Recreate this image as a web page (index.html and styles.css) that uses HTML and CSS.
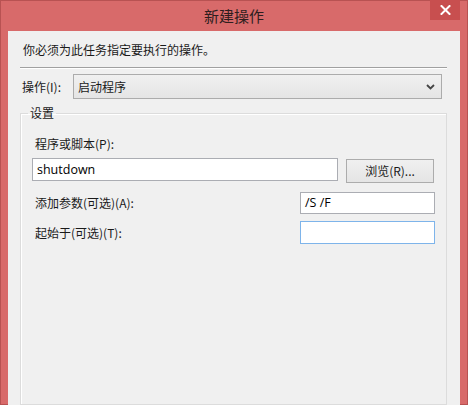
FILE: index.html
```html
<!DOCTYPE html>
<html lang="zh-CN">
<head>
<meta charset="utf-8">
<title>新建操作</title>
<link rel="stylesheet" href="styles.css">
</head>
<body>
<div class="window">
  <div class="titlebar">
    <div class="title">新建操作</div>
    <div class="close">
      <svg width="11" height="10" viewBox="0 0 11 10"><path d="M1.5 1 L9.5 9 M9.5 1 L1.5 9" stroke="#ffffff" stroke-width="2" stroke-linecap="square"/></svg>
    </div>
  </div>
  <div class="client">
    <div class="instr">你必须为此任务指定要执行的操作。</div>
    <div class="sep"></div>
    <div class="action-row">
      <span class="label">操作(I):</span>
      <div class="select">
        <span class="select-text">启动程序</span>
        <svg class="chev" width="9" height="6" viewBox="0 0 9 6"><path d="M1 1 L4.5 4.5 L8 1" stroke="#444" stroke-width="1.8" fill="none"/></svg>
      </div>
    </div>
    <fieldset class="group">
      <legend class="legend">设置</legend>
      <div class="field-label">程序或脚本(P):</div>
      <div class="prog-row">
        <div class="input prog">shutdown</div>
        <div class="button">浏览(R)...</div>
      </div>
      <div class="arg-row">
        <span class="field-label inline">添加参数(可选)(A):</span>
        <div class="input small">/S /F</div>
      </div>
      <div class="arg-row second">
        <span class="field-label inline">起始于(可选)(T):</span>
        <div class="input small focus"></div>
      </div>
    </fieldset>
  </div>
</div>
</body>
</html>
```
FILE: styles.css
```css
html, body {
  margin: 0;
  padding: 0;
  width: 468px;
  height: 405px;
  overflow: hidden;
}
body {
  font-family: "Noto Sans CJK SC", "Noto Sans", sans-serif;
  font-size: 12px;
  color: #1a1a1a;
}
.window {
  width: 468px;
  height: 405px;
  background: #d86a6a;
  box-shadow: inset 0 0 0 1px #b85252;
  display: flex;
  flex-direction: column;
  position: relative;
}
.titlebar {
  height: 31px;
  flex: none;
}
.title {
  text-align: center;
  line-height: 32px;
  font-size: 15px;
  color: #2e1e1e;
}
.close {
  position: absolute;
  top: 0;
  right: 8px;
  width: 30px;
  height: 20px;
  background: #c84f4f;
  display: flex;
  align-items: center;
  justify-content: center;
}
.client {
  flex: 1;
  margin: 0 8px;
  background: #f0f0f0;
  display: flex;
  flex-direction: column;
}
.instr {
  margin: 10px 0 0 15px;
  line-height: 18px;
  height: 18px;
}
.sep {
  margin: 8px 13px 0 12px;
  height: 1px;
  background: #a0a0a0;
  border-bottom: 1px solid #ffffff;
}
.action-row {
  display: flex;
  align-items: center;
  margin: 5px 0 0 14px;
  height: 25px;
}
.label {
  width: 51px;
  line-height: 25px;
}
.select {
  height: 23px;
  border: 1px solid #acacac;
  background: linear-gradient(#f0f0f0, #e5e5e5);
  display: flex;
  align-items: center;
  justify-content: space-between;
  padding: 0 6px 0 4px;
  box-sizing: content-box;
  width: 357px;
}
.select-text {
  line-height: 23px;
}
.group {
  margin: 6px 13px 0 12px;
  padding: 0;
  border: 1px solid #dcdcdc;
  box-shadow: inset 1px 1px 0 #ffffff;
  flex: 1;
  min-width: 0;
}
.legend {
  margin-left: 7px;
  padding: 0 2px;
  line-height: 16px;
  font-size: 12px;
}
.field-label {
  margin-left: 14px;
  line-height: 18px;
}
.group > .field-label {
  margin-top: 14px;
}
.prog-row {
  display: flex;
  align-items: flex-start;
  margin: 5px 0 0 11px;
}
.input {
  box-sizing: border-box;
  background: #ffffff;
  border: 1px solid #abadb3;
  padding: 0 4px;
  font-size: 13px;
  line-height: 21px;
  color: #000;
}
.prog {
  width: 306px;
  height: 23px;
  font-family: "Open Sans", "Noto Sans", sans-serif;
  font-size: 12.5px;
}
.button {
  box-sizing: border-box;
  margin: 1px 0 0 8px;
  width: 88px;
  height: 24px;
  border: 1px solid #acacac;
  background: linear-gradient(#f0f0f0, #e5e5e5);
  text-align: center;
  line-height: 22px;
}
.arg-row {
  display: flex;
  align-items: center;
  justify-content: space-between;
  margin: 9px 11px 0 0;
}
.arg-row.second {
  margin-top: 7px;
}
.inline {
  line-height: 18px;
}
.small {
  width: 135px;
  height: 22px;
  font-family: "Open Sans", "Noto Sans", sans-serif;
  font-size: 12.5px;
  line-height: 20px;
}
.small.focus {
  height: 23px;
  border-color: #7eb4ea;
}
```
